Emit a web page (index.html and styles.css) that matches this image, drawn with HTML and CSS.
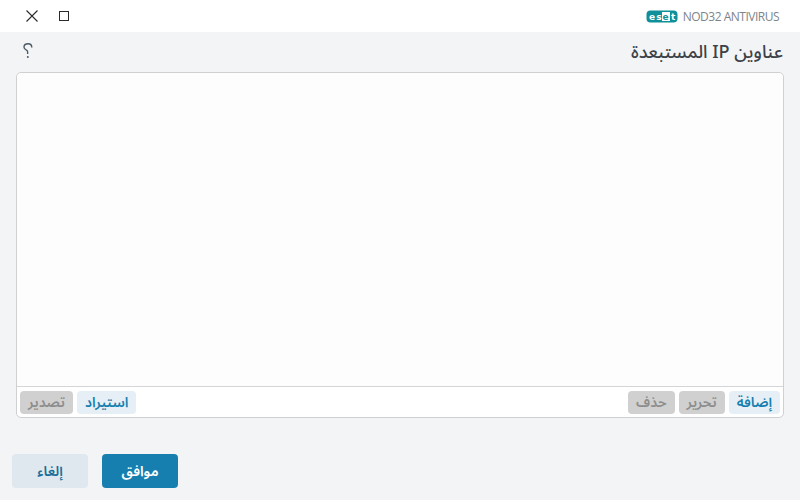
FILE: index.html
```html
<!DOCTYPE html>
<html lang="ar" dir="rtl">
<head>
<meta charset="utf-8">
<title>عناوين IP المستبعدة</title>
<link rel="stylesheet" href="styles.css">
</head>
<body>
<div class="window">
  <header class="titlebar">
    <div class="brand" dir="ltr">
      <svg class="logo" width="32" height="13" viewBox="0 0 32 13">
        <rect x="0.500" y="0.500" width="31" height="12" rx="4" fill="#0f8f99"/>
        <rect x="16" y="2" width="8" height="9" fill="#fff"/>
        <text x="3" y="9.600" class="logo-s">e</text>
        <text x="10.300" y="9.600" class="logo-s">s</text>
        <text x="16.500" y="9.600" class="logo-e">e</text>
        <text x="25" y="9.600" class="logo-s">t</text>
      </svg>
      <span class="product">NOD32 ANTIVIRUS</span>
    </div>
    <div class="controls">
      <svg class="icon" width="14" height="14" viewBox="0 0 14 14"><rect x="2.500" y="2.500" width="9" height="9" fill="none" stroke="#2b2b2b" stroke-width="1"/></svg>
      <svg class="icon" width="14" height="14" viewBox="0 0 14 14"><path d="M1.500 1.500L12.500 12.500M12.500 1.500L1.500 12.500" fill="none" stroke="#2b2b2b" stroke-width="1.100"/></svg>
    </div>
  </header>
  <main class="content">
    <div class="heading">
      <h1 class="title">عناوين IP المستبعدة</h1>
      <svg class="help" width="12" height="18" viewBox="0 0 12 18"><path d="M2.200 5.500C2.200 3.200 4 1.800 6 1.800C8.200 1.800 10 3.200 10 5.300C10 7 8 7.600 6.800 8.800C6.200 9.400 6.200 10.500 6.400 12" transform="matrix(-1 0 0 1 12 0)" fill="none" stroke="#4a5a66" stroke-width="1.400"/><circle cx="5.800" cy="15" r="1" fill="#4a5a66"/></svg>
    </div>
    <section class="panel">
      <div class="list"></div>
      <div class="toolbar">
        <div class="group">
          <button class="tool tool-on">إضافة</button>
          <button class="tool tool-off">تحرير</button>
          <button class="tool tool-off">حذف</button>
        </div>
        <div class="group">
          <button class="tool tool-on">استيراد</button>
          <button class="tool tool-off">تصدير</button>
        </div>
      </div>
    </section>
  </main>
  <footer class="footer">
    <button class="action action-primary">موافق</button>
    <button class="action action-secondary">إلغاء</button>
  </footer>
</div>
</body>
</html>
```
FILE: styles.css
```css
html, body {
  margin: 0;
  padding: 0;
}
body {
  font-family: "Noto Sans Arabic", "Noto Sans", "DejaVu Sans", sans-serif;
  background: #f3f4f6;
}
.window {
  width: 800px;
  height: 500px;
  display: flex;
  flex-direction: column;
  overflow: hidden;
}
.titlebar {
  height: 32px;
  background: #fff;
  display: flex;
  align-items: center;
  justify-content: space-between;
  padding: 0 21px 0 25px;
  flex: none;
}
.brand {
  display: flex;
  align-items: center;
  gap: 5px;
}
.logo {
  display: block;
}
.logo-e, .logo-s {
  font-family: "DejaVu Sans", sans-serif;
  font-weight: 700;
  font-size: 9px;
}
.logo-e { fill: #0f8f99; }
.logo-s { fill: #fff; }
.product {
  font-family: "Open Sans", "Noto Sans", sans-serif;
  font-size: 12px;
  letter-spacing: -0.500px;
  color: #7d858b;
}
.controls {
  display: flex;
  gap: 18px;
  align-items: center;
}
.icon {
  display: block;
}
.content {
  height: 386px;
  padding: 0 16px;
  display: flex;
  flex-direction: column;
  flex: none;
}
.heading {
  height: 40px;
  display: flex;
  align-items: center;
  justify-content: space-between;
  padding: 0 1px 0 6px;
}
.title {
  margin: 0;
  font-size: 18px;
  font-weight: 500;
  line-height: 24px;
  color: #3c4248;
}
.help {
  display: block;
  margin-bottom: 2px;
}
.panel {
  height: 346px;
  box-sizing: border-box;
  background: #fff;
  border: 1px solid #cfd0d1;
  border-radius: 5px;
  display: flex;
  flex-direction: column;
}
.list {
  flex: 1;
  background: #fdfdfd;
  border-bottom: 1px solid #d4d5d6;
  border-radius: 5px 5px 0 0;
}
.toolbar {
  height: 30px;
  flex: none;
  display: flex;
  align-items: center;
  justify-content: space-between;
  padding: 0 3px;
}
.group {
  display: flex;
  gap: 4px;
}
.tool {
  height: 23px;
  padding: 0 8px;
  border: 0;
  border-radius: 4px;
  font-family: inherit;
  font-size: 14px;
  font-weight: 600;
  line-height: 23px;
}
.tool-on {
  background: #e6eff5;
  color: #177fb0;
}
.tool-off {
  background: #d0d0d0;
  color: #8d8d8d;
}
.footer {
  flex: 1;
  display: flex;
  justify-content: flex-end;
  gap: 14px;
  padding: 36px 12px 0;
}
.action {
  width: 76px;
  height: 34px;
  border: 0;
  border-radius: 4px;
  font-family: inherit;
  font-size: 14px;
  font-weight: 600;
}
.action-primary {
  background: #177fb0;
  color: #fff;
}
.action-secondary {
  background: #dfe8ee;
  color: #1a6f9a;
}
```
